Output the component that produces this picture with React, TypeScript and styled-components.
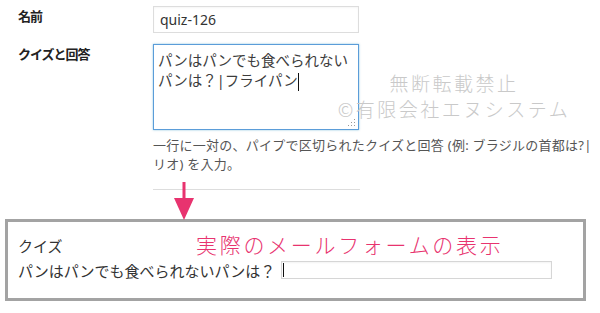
import styled, { createGlobalStyle } from "styled-components";

const GlobalStyle = createGlobalStyle`
  html, body {
    margin: 0;
    padding: 0;
    background: #fff;
  }
  body {
    font-family: "Noto Sans", "Noto Sans CJK JP", sans-serif;
    color: #333;
  }
`;

const Page = styled.div`
  position: relative;
  width: 600px;
  height: 313px;
  overflow: hidden;
  padding: 6px 0 0 5px;
  box-sizing: border-box;
`;

const FormTable = styled.div`
  display: grid;
  grid-template-columns: 135px 1fr;
  row-gap: 11px;
  padding-left: 13px;
`;

const Label = styled.div`
  font-size: 13px;
  font-weight: 700;
  line-height: 20px;
  color: #222;
  letter-spacing: -1px;
`;

const Field = styled.div`
  display: flex;
  flex-direction: column;
`;

const TextInput = styled.div`
  box-sizing: border-box;
  width: 206px;
  height: 27px;
  border: 1px solid #ddd;
  box-shadow: inset 0 1px 2px rgba(0, 0, 0, 0.04);
  padding: 0 6px;
  font-size: 14px;
  line-height: 25px;
  color: #333;
`;

const TextArea = styled.div`
  position: relative;
  box-sizing: border-box;
  width: 206px;
  height: 86px;
  border: 1px solid #5b9dd9;
  box-shadow: 0 0 2px rgba(30, 140, 190, 0.5);
  padding: 5px 4px;
  font-size: 14.5px;
  line-height: 20px;
  color: #3c3c3c;
`;

const Caret = styled.span<{ $h?: number }>`
  display: inline-block;
  width: 1px;
  height: ${(p) => p.$h ?? 18}px;
  background: #111;
  vertical-align: middle;
`;

const ResizeGrip = styled.svg`
  position: absolute;
  right: 2px;
  bottom: 2px;
`;

const Help = styled.p`
  margin: 6px 0 0;
  font-size: 13px;
  line-height: 19px;
  letter-spacing: 0.25px;
  color: #555;
  white-space: nowrap;
`;

const Divider = styled.hr`
  margin: 15px 0 0 148px;
  width: 207px;
  border: none;
  border-top: 1px solid #ddd;
`;

const PreviewBox = styled.div`
  position: relative;
  margin-top: 29px;
  width: 581px;
  height: 82px;
  box-sizing: border-box;
  border: 3px solid #a3a3a3;
  padding: 14px 10px 0;
`;

const PreviewTitle = styled.div`
  font-size: 15px;
  line-height: 20px;
  color: #333;
`;

const QuestionRow = styled.div`
  display: flex;
  align-items: center;
  gap: 6px;
  margin-top: 4px;
  height: 20px;
`;

const Question = styled.span`
  font-size: 15px;
  color: #333;
`;

const AnswerInput = styled.div`
  box-sizing: border-box;
  width: 271px;
  height: 18px;
  border: 1px solid #d6d6d6;
  box-shadow: inset 0 1px 2px rgba(0, 0, 0, 0.05);
  display: flex;
  align-items: center;
  padding-left: 1px;
`;

const Annotation = styled.div`
  position: absolute;
  left: 188px;
  top: 10px;
  font-family: "Noto Sans CJK JP", sans-serif;
  font-weight: 300;
  font-size: 21px;
  line-height: 24px;
  letter-spacing: 2.7px;
  color: #e8336f;
  white-space: nowrap;
`;

const Watermark = styled.div`
  position: absolute;
  left: 330px;
  top: 70px;
  width: 248px;
  text-align: center;
  font-family: "Noto Sans CJK JP", sans-serif;
  font-weight: 300;
  font-size: 19px;
  line-height: 26px;
  letter-spacing: 2.5px;
  color: #c9c9c9;
  white-space: nowrap;
  pointer-events: none;
`;

const Arrow = styled.svg`
  position: absolute;
  left: 174px;
  top: 182px;
`;

export default function App() {
  return (
    <>
      <GlobalStyle />
      <Page>
        <FormTable>
          <Label>名前</Label>
          <Field>
            <TextInput>quiz-126</TextInput>
          </Field>
          <Label>クイズと回答</Label>
          <Field>
            <TextArea role="textbox" aria-multiline="true">
              パンはパンでも食べられない
              <br />
              パンは？|フライパン
              <Caret />
              <ResizeGrip width="8" height="8" viewBox="0 0 8 8">
                <g fill="#9a9a9a">
                  <rect x="6" y="0" width="1" height="1" />
                  <rect x="3" y="3" width="1" height="1" />
                  <rect x="6" y="3" width="1" height="1" />
                  <rect x="0" y="6" width="1" height="1" />
                  <rect x="3" y="6" width="1" height="1" />
                  <rect x="6" y="6" width="1" height="1" />
                </g>
              </ResizeGrip>
            </TextArea>
            <Help>
              一行に一対の、パイプで区切られたクイズと回答 (例: ブラジルの首都は?|
              <br />
              リオ) を入力。
            </Help>
          </Field>
        </FormTable>
        <Divider />
        <PreviewBox>
          <PreviewTitle>クイズ</PreviewTitle>
          <QuestionRow>
            <Question>パンはパンでも食べられないパンは？</Question>
            <AnswerInput>
              <Caret $h={14} />
            </AnswerInput>
          </QuestionRow>
          <Annotation>実際のメールフォームの表示</Annotation>
        </PreviewBox>
        <Watermark>
          無断転載禁止
          <br />
          ©有限会社エヌシステム
        </Watermark>
        <Arrow width="20" height="38" viewBox="0 0 20 38">
          <rect x="8.5" y="0" width="3" height="20" fill="#e8336f" />
          <polygon points="0,16 20,16 10,38" fill="#e8336f" />
        </Arrow>
      </Page>
    </>
  );
}
